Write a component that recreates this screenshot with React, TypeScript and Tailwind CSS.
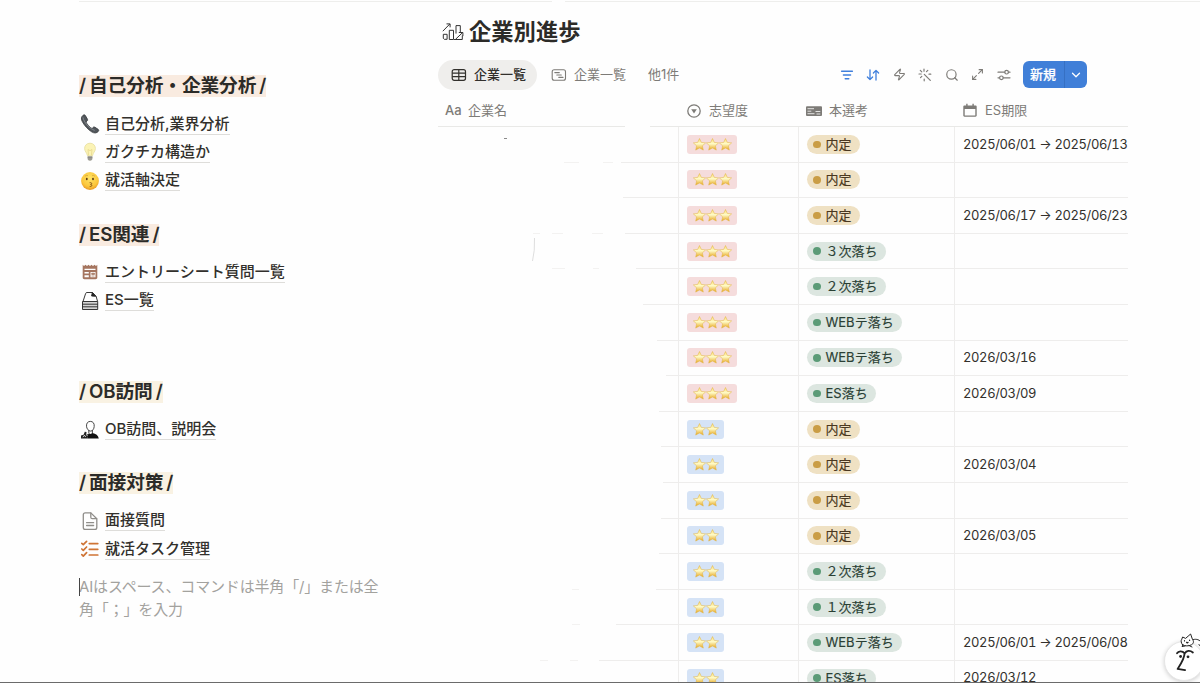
import type { ReactNode } from "react";
import { ChevronDown, Maximize2, Search, Zap } from "lucide-react";

type Tone = "gold" | "green";

type Row = {
  stars: 2 | 3;
  status: string;
  tone: Tone;
  date?: string;
  // visible length of the line under the name cell
  line: number;
  dashes?: [number, number][];
};

const ROWS: Row[] = [
  { stars: 3, status: "内定", tone: "gold", date: "2025/06/01 → 2025/06/13", line: 57, dashes: [[126, 15], [165, 10]] },
  { stars: 3, status: "内定", tone: "gold", line: 55 },
  { stars: 3, status: "内定", tone: "gold", date: "2025/06/17 → 2025/06/23", line: 53, dashes: [[95, 7], [114, 11], [154, 11]] },
  { stars: 3, status: "３次落ち", tone: "green", line: 42, dashes: [[114, 13], [155, 6]] },
  { stars: 3, status: "２次落ち", tone: "green", line: 35 },
  { stars: 3, status: "WEBテ落ち", tone: "green", line: 21 },
  { stars: 3, status: "WEBテ落ち", tone: "green", date: "2026/03/16", line: 12 },
  { stars: 3, status: "ES落ち", tone: "green", date: "2026/03/09", line: 19 },
  { stars: 2, status: "内定", tone: "gold", line: 17 },
  { stars: 2, status: "内定", tone: "gold", date: "2026/03/04", line: 15 },
  { stars: 2, status: "内定", tone: "gold", line: 17 },
  { stars: 2, status: "内定", tone: "gold", date: "2026/03/05", line: 19 },
  { stars: 2, status: "２次落ち", tone: "green", line: 22, dashes: [[134, 7]] },
  { stars: 2, status: "１次落ち", tone: "green", line: 62, dashes: [[134, 8]] },
  { stars: 2, status: "WEBテ落ち", tone: "green", date: "2025/06/01 → 2025/06/08", line: 79, dashes: [[102, 8], [132, 8]] },
  { stars: 2, status: "ES落ち", tone: "green", date: "2026/03/12", line: 79 },
];

function PhoneIcon() {
  return (
    <svg viewBox="0 0 20 20" className="size-5">
      <path d="M3.200 1.200C1.200 2.600.8 5 2.300 7.600c2 3.900 5.700 7.900 9.300 10.200 2.600 1.700 5.200 1.500 6.800-.5.500-.7.400-1.500-.3-2l-3.100-2c-.8-.5-1.600-.4-2.100.3l-.8 1c-2.500-1.400-5-4.200-6.200-6.700l1.100-.8c.7-.5.800-1.200.4-2L5.400 1.600c-.5-.9-1.300-1-2.200-.4Z" fill="#51565b" stroke="#33373a" strokeWidth=".8" />
      <path d="M3 3.400c.7 4.600 6.200 11.200 11.700 13" stroke="#8b9196" strokeWidth=".8" fill="none" />
    </svg>
  );
}

function BulbIcon() {
  return (
    <svg viewBox="0 0 20 20" className="size-5">
      <path d="M10 1.200c-3.400 0-5.400 2.400-5.400 5.400 0 2.700 2.300 4.100 2.900 7.200h5c.6-3.100 2.900-4.500 2.900-7.200 0-3-2-5.400-5.400-5.400Z" fill="#fbf3b5" stroke="#e6dda0" strokeWidth=".8" />
      <path d="M8.600 13.500 8 7.500l2 1.200 2-1.200-.6 6" fill="none" stroke="#e0cf80" strokeWidth=".6" />
      <path d="M7.600 14h4.800v3l-1.300 1.700H8.900L7.600 17Z" fill="#aaa99f" />
      <path d="M7.600 15.500h4.800M7.800 17h4.400" stroke="#777" strokeWidth=".6" />
    </svg>
  );
}

function KissIcon() {
  return (
    <svg viewBox="0 0 20 20" className="size-5">
      <defs>
        <radialGradient id="face" cx=".5" cy=".35" r=".65">
          <stop offset="0" stopColor="#ffe467" />
          <stop offset=".7" stopColor="#fbc63b" />
          <stop offset="1" stopColor="#e99a25" />
        </radialGradient>
      </defs>
      <circle cx="10" cy="10" r="8.900" fill="url(#face)" />
      <ellipse cx="6.800" cy="8" rx=".9" ry="1.300" fill="#5b3c16" />
      <ellipse cx="13" cy="8" rx=".9" ry="1.300" fill="#5b3c16" />
      <path d="M5 5.200q1.500-1.400 3-.5M12 4.700q1.600-.8 3 .6" fill="none" stroke="#c08a2a" strokeWidth=".5" />
      <path d="M10 11.600c2-.3 2.400 1.500.6 1.900 2 .2 1.600 2.200-.5 2" fill="none" stroke="#7b4a18" strokeWidth=".9" strokeLinecap="round" />
    </svg>
  );
}

function NewsIcon() {
  return (
    <svg viewBox="0 0 20 20" className="size-5">
      <path d="M2.700 2.700 4 4l1.500-1.300L7 4l1.500-1.300L10 4l1.500-1.300L13 4l1.500-1.300L16 4l1.300-1.300v12.800c0 1-.7 1.700-1.700 1.700H4.400c-1 0-1.700-.7-1.700-1.700Z" fill="#a5755f" />
      <path d="M4.500 6.700h11v1.300h-11ZM4.500 10h4.300v1.500H4.500ZM4.500 13.300h4.300v1.900H4.500ZM10.500 10h5v5.200h-5Z" fill="#fefefe" />
      <path d="M11.700 11.200h2.800v1.200h-2.800ZM11.500 14h3" fill="#a5755f" stroke="#a5755f" strokeWidth=".7" />
    </svg>
  );
}

function PaperStackIcon() {
  return (
    <svg viewBox="0 0 20 20" className="size-5" fill="none" stroke="#222" strokeWidth=".9">
      <path d="M3 10.500 5.600 2.600c.2-.7.600-1.100 1.300-1.100h5.600l3.600 3.800 1.500 5.200" />
      <path d="m12.300 1.600-.7 3.400 4.200.3Z" fill="#222" />
      <path d="M2.500 10.500h15.200v8H2.500Z" fill="#d5d5d5" />
      <path d="M2.500 13.200h15.200M2.500 15.800h15.200" />
    </svg>
  );
}

function PersonIcon() {
  return (
    <svg viewBox="0 0 20 20" className="size-5">
      <path d="M6.500 6.200C6.300 3.100 7.900 1.400 10.400 1.400s4.100 1.900 3.800 5c-.2 2.600-1.500 4.700-3.600 4.700S6.700 8.800 6.500 6.200Z" fill="#fff" stroke="#333" strokeWidth=".9" />
      <path d="M8.800 10.300v2.700M12.400 10.300v2.700" stroke="#333" strokeWidth=".9" />
      <path d="M7.500 18.600c0-2.600.3-4.400 1.300-5.400l1.800.9 1.800-1c3.400.6 5.900 2.300 6.400 5.500Z" fill="#111" />
      <path d="M1 18.600v-3l2.600-.8 1.200-3 1.700.2-.2 2 2 .6-.8 4Z" fill="#222" />
      <path d="m2.800 16.800 1.800-1.400 1 1.500M6 14.500l1.500 1" stroke="#fff" strokeWidth=".9" fill="none" />
    </svg>
  );
}

function PageIcon() {
  return (
    <svg viewBox="0 0 20 20" className="size-5" fill="none" stroke="#908e8a" strokeWidth="1.300" strokeLinejoin="round" strokeLinecap="round">
      <path d="M5.200 1.900h5.600l6 5.800v8.700c0 1.200-.7 1.900-1.900 1.900H5.200c-1.200 0-1.900-.7-1.900-1.900V3.800c0-1.200.7-1.900 1.900-1.900Z" />
      <path d="M10.800 2v4.200c0 1 .5 1.500 1.500 1.500h4.300M6.600 11.700h7M6.600 14.500h7" />
    </svg>
  );
}

function ChecklistIcon() {
  return (
    <svg viewBox="0 0 20 20" className="size-5" fill="none" stroke="#cf7435" strokeWidth="1.700" strokeLinecap="round" strokeLinejoin="round">
      <path d="m1.800 4.300 1.500 1.400L6.600 2.300M1.800 10l1.500 1.400L6.600 8M1.800 15.700l1.500 1.400 3.300-3.400M9.300 4.600h8.500M9.300 10.300h8.500M9.300 16h8.500" />
    </svg>
  );
}

function ChartIcon() {
  return (
    <svg viewBox="0 0 22 20" className="h-5 w-[22px]" fill="none" stroke="#333" strokeWidth="1">
      <path d="M.8 9.200 7.800 2M4.500 1.900h3.600v3.400" />
      <path d="M1.300 12.300h3.800v5H2.300l-1-1ZM7.300 8.300h4.200v9.200H7.300ZM14 3.600h4.300v7M14 3.600v8M12 17.500h8.300v-4" />
      <path d="m13.500 17.300 7.200-6.800M16.800 10.500h4.100v3.600" />
    </svg>
  );
}

function StarIcon() {
  return (
    <svg viewBox="0 0 13 13" className="h-[13px] w-[13px]">
      <path d="m6.500.5 1.800 3.900 4.300.5-3.200 2.900.9 4.300-3.800-2.100-3.800 2.100.9-4.300L.4 4.900l4.300-.5Z" fill="url(#star)" stroke="#e2b544" strokeWidth=".5" strokeLinejoin="round" />
    </svg>
  );
}

function Heading({ children, className }: { children: ReactNode; className: string }) {
  return (
    <h2 className="flex h-[22px] text-[18.700px] font-semibold leading-[22px] tracking-[-0.1px] text-[#2c2b28] [word-spacing:-1.600px]">
      <span className={className}>/ {children} /</span>
    </h2>
  );
}

function PageLink({ icon, children }: { icon: ReactNode; children: ReactNode }) {
  return (
    <a className="flex h-[28.300px] items-center gap-[5px] pl-px text-[15px] font-medium text-[#32302c]">
      {icon}
      <span className="border-b border-[#deddda] leading-[20px]">{children}</span>
    </a>
  );
}

function StatusPill({ tone, children }: { tone: Tone; children: ReactNode }) {
  const gold = tone === "gold";
  return (
    <span className={`flex h-[19px] items-center gap-[5px] rounded-full pl-[6px] pr-[8px] text-[13px] leading-[19px] ${gold ? "bg-[#efe1c3] text-[#4a3820] [-webkit-text-stroke:0.15px_#4a3820]" : "bg-[#dce6e0] text-[#2a4034] [-webkit-text-stroke:0.15px_#2a4034]"}`}>
      <span className={`size-[7.500px] rounded-full ${gold ? "bg-[#ca9d45]" : "bg-[#5b9b77]"}`} />
      {children}
    </span>
  );
}

function Sidebar() {
  return (
    <aside className="ml-[79px] w-[305px] shrink-0 pt-[75px]">
      <Heading className="bg-[#f9ebe0]">自己分析・企業分析</Heading>
      <div className="mt-[13px]">
        <PageLink icon={<PhoneIcon />}>自己分析,業界分析</PageLink>
        <PageLink icon={<BulbIcon />}>ガクチカ構造か</PageLink>
        <PageLink icon={<KissIcon />}>就活軸決定</PageLink>
      </div>

      <div className="mt-[29px]">
        <Heading className="bg-[#f9ebe0]">ES関連</Heading>
        <div className="mt-[12.200px]">
          <PageLink icon={<NewsIcon />}>エントリーシート質問一覧</PageLink>
          <PageLink icon={<PaperStackIcon />}>ES一覧</PageLink>
        </div>
      </div>

      <div className="mt-[66.500px]">
        <Heading className="bg-[#f9f2e3]">OB訪問</Heading>
        <div className="mt-[12.500px]">
          <PageLink icon={<PersonIcon />}>OB訪問、説明会</PageLink>
        </div>
      </div>

      <div className="mt-[28.500px]">
        <Heading className="bg-[#f9f2e3]">面接対策</Heading>
        <div className="mt-[12.300px]">
          <PageLink icon={<PageIcon />}>面接質問</PageLink>
          <PageLink icon={<ChecklistIcon />}>就活タスク管理</PageLink>
        </div>
      </div>

      <p className="relative mt-[13px] text-[15px] leading-[22.500px] tracking-[-0.160px] text-[#a3a29e]">
        <span className="absolute left-0 top-[2px] h-[18px] w-px bg-[#444]" />
        AIはスペース、コマンドは半角「/」または全
        <br />
        角「；」を入力
      </p>
    </aside>
  );
}

function Toolbar() {
  return (
    <div className="flex h-[30px] items-center text-[13px] text-[#7d7b77]">
      <div className="flex h-[30px] w-[99px] items-center gap-[7px] rounded-full bg-[#efeeec] pl-[13px] font-medium text-[#32302c]">
        <svg viewBox="0 0 16 16" className="size-4" fill="none" stroke="currentColor" strokeWidth="1.200">
          <rect x="1.200" y="2.700" width="13.300" height="10.600" rx="2" />
          <path d="M1.200 6.200h13.300M1.200 9.700h13.300M7.800 2.700v10.600" />
        </svg>
        企業一覧
      </div>
      <div className="ml-[14px] flex items-center gap-[7px]">
        <svg viewBox="0 0 16 16" className="size-4" fill="none" stroke="currentColor" strokeWidth="1.100" strokeLinecap="round">
          <rect x="1.200" y="2.700" width="13.300" height="10.600" rx="2" />
          <path d="M3.800 5.600h4.500M5.800 8h4.500M7.800 10.400h4.200" />
        </svg>
        企業一覧
      </div>
      <span className="ml-[22px]">他1件</span>

      <div className="ml-auto flex items-center gap-[10.200px]">
        <svg viewBox="0 0 16 16" className="size-4 text-[#3f7fdc]" fill="none" stroke="currentColor" strokeWidth="1.400" strokeLinecap="round">
          <path d="M2.600 4.200h10.800M4.400 8h7.200M6.200 11.800h3.600" />
        </svg>
        <svg viewBox="0 0 16 16" className="size-4 text-[#3f7fdc]" fill="none" stroke="currentColor" strokeWidth="1.300" strokeLinecap="round" strokeLinejoin="round">
          <path d="M5 3v9.500M2.400 10 5 12.600 7.600 10M11 13V3.500M8.400 6 11 3.400 13.600 6" />
        </svg>
        <Zap className="mx-[1.500px] size-[13px]" strokeWidth={2} />
        <svg viewBox="0 0 16 16" className="size-4" fill="none" stroke="currentColor" strokeWidth="1.200" strokeLinecap="round">
          <path d="m7.300 7.300 6 6M7 2v2.200M2 7h2.200M3.300 3.300l1.500 1.500M10.800 3.300 9.500 4.600M3.500 10.700l1.300-1.300M12 7.200h1.800M7.200 12v1.800" />
        </svg>
        <Search className="mx-px size-[14px]" strokeWidth={2} />
        <Maximize2 className="mx-[1.500px] size-[13px]" strokeWidth={2} />
        <svg viewBox="0 0 16 16" className="size-4" fill="none" stroke="currentColor" strokeWidth="1.200" strokeLinecap="round">
          <path d="M2 5.200h6.700M12.500 5.200H14M2 10.800h1.500M7.300 10.800H14" />
          <circle cx="10.600" cy="5.200" r="1.800" />
          <circle cx="5.400" cy="10.800" r="1.800" />
        </svg>
      </div>
      <div className="ml-[10.500px] mr-[41.500px] flex h-[27px] w-[64px] items-center overflow-hidden rounded-[6px] bg-[#407fd8] text-white">
        <span className="flex h-full w-[42px] items-center justify-center border-r border-[#3670c3] font-medium [-webkit-text-stroke:0.200px_#fff]">新規</span>
        <ChevronDown className="mx-auto size-[14px]" strokeWidth={2.2} />
      </div>
    </div>
  );
}

function TableHeader() {
  return (
    <div className="flex h-[31px] items-center text-[13px] text-[#7d7b77]">
      <div className="flex w-[241px] items-center gap-[7px] pl-[7px]">
        <span className="w-[16px] text-[13px] font-medium">Aa</span>
        企業名
      </div>
      <div className="flex w-[120px] items-center gap-[7px] pl-[7px]">
        <svg viewBox="0 0 16 16" className="size-4">
          <circle cx="8" cy="8" r="6.200" fill="none" stroke="currentColor" strokeWidth="1.300" />
          <path d="M5.200 6.200h5.600L8 10.500Z" fill="currentColor" />
        </svg>
        志望度
      </div>
      <div className="flex w-[156px] items-center gap-[7px] pl-[7px]">
        <svg viewBox="0 0 16 16" className="size-4">
          <rect x="0" y="3.300" width="16" height="9.700" rx="1" fill="currentColor" />
          <path d="M1.500 5.700h6.500M1.500 8.200h3.800M9.500 8.500h4.800M1.500 10.700h7M10.500 11h3.800" stroke="#fefefe" strokeWidth=".8" />
        </svg>
        本選考
      </div>
      <div className="flex items-center gap-[7px] pl-[7px]">
        <svg viewBox="0 0 16 16" className="size-4">
          <path d="M2.500 2.400h1.700V.8h1.400v1.600h4.800V.8h1.400v1.600h1.700c.7 0 1.200.5 1.200 1.200v9c0 .7-.5 1.200-1.200 1.200h-11c-.7 0-1.200-.5-1.200-1.200v-9c0-.7.500-1.200 1.200-1.200Z" fill="currentColor" />
          <path d="M2.700 6h10.600v6.500H2.700Z" fill="#fefefe" />
        </svg>
        ES期限
      </div>
    </div>
  );
}

function TableRow({ row }: { row: Row }) {
  return (
    <div className="flex h-[35.600px] shrink-0 text-[13px]">
      <div className="relative flex w-[240px] items-end justify-end">
        {row.dashes?.map(([x, w]) => (
          <span key={x} className="absolute bottom-0 h-px bg-[#f3f2f1]" style={{ left: x, width: w }} />
        ))}
        <span className="h-px bg-[#eeedec]" style={{ width: row.line }} />
      </div>
      <div className="flex w-[120px] items-center border-b border-l border-[#eeedec] pl-[8px]">
        <span className={`flex h-[19px] items-center rounded-[3px] px-[5.500px] ${row.stars === 3 ? "bg-[#f5dcdc]" : "bg-[#d5e3f6]"}`}>
          {Array.from({ length: row.stars }, (_, i) => <StarIcon key={i} />)}
        </span>
      </div>
      <div className="flex w-[156px] items-center border-b border-l border-[#eeedec] pl-[8px]">
        <StatusPill tone={row.tone}>{row.status}</StatusPill>
      </div>
      <div className="flex w-[174px] items-center whitespace-nowrap border-b border-l border-[#eeedec] pl-[8px] tabular-nums tracking-[-0.370px] text-[#32302c]">
        {row.date}
      </div>
    </div>
  );
}

function Database() {
  return (
    <main className="ml-[54px] flex w-[690px] shrink-0 flex-col pt-[16px]">
      <h1 className="flex h-[32px] items-center gap-[5px] pl-[4px] text-[22.300px] font-bold leading-[32px] text-[#2c2b28]">
        <ChartIcon />
        企業別進歩
      </h1>
      <div className="mt-[11.500px]">
        <Toolbar />
      </div>
      <div className="mt-[5.500px]">
        <TableHeader />
      </div>
      <div className="flex h-px shrink-0 justify-between">
        <span className="w-[187px] bg-[#e9e9e7]" />
        <span className="w-[478px] bg-[#e9e9e7]" />
      </div>
      {ROWS.map((row, i) => <TableRow key={i} row={row} />)}
    </main>
  );
}

function Assistant() {
  return (
    <div className="absolute bottom-[2px] right-[-4px] size-[40px] rounded-full border border-[#e6e6e6] bg-white shadow-[0_1px_4px_rgba(0,0,0,0.18)]">
      <svg viewBox="0 0 40 52" className="absolute -left-px -top-[12px] h-[52px] w-[40px]" fill="none" stroke="#222" strokeLinecap="round" strokeLinejoin="round">
        <path d="M18.500 14.800c-1.500-2-1.800-4-.7-5.600l.8-2.200 3 1.400 2.500-2.200 2.500-2.200 1.800 5.200c1.700 2.400 1.300 4.300-1 5.600-2.700 1.500-6.400 1.500-8.900 0Z" fill="#fff" strokeWidth="1" />
        <path d="M29.500 9.500c3-.7 6 .1 8 3M35 14.500l2 2.500M19 15l-1 1.500 3-.5M25 15.500l3 1.500" strokeWidth="1" />
        <path d="M20.500 10.700v.2M25.600 10.200v.2M22.500 12.300l.8.600.8-.6" strokeWidth="1.200" />
        <path d="M13 23.300c1.300-2.200 5.200-2.900 7.600.1 2-2.900 5.300-3.400 8.300-.9M20.600 23.400c-.4 6-4 10.800-7 15.500l7.500 1.300" strokeWidth="1.800" />
        <circle cx="16.600" cy="26.500" r="1.400" fill="#222" stroke="none" />
        <circle cx="24" cy="26.800" r="1.400" fill="#222" stroke="none" />
      </svg>
    </div>
  );
}

export default function App() {
  return (
    <div className="relative flex h-[683px] w-[1200px] overflow-hidden bg-[#fefefe] font-['Inter','Noto_Sans_CJK_JP',sans-serif]" lang="ja">
      {/* gradient shared by every star */}
      <svg className="absolute size-0">
        <linearGradient id="star" x1="0" y1="0" x2="0" y2="1">
          <stop offset="0" stopColor="#f8dc72" />
          <stop offset=".45" stopColor="#fffbc8" />
          <stop offset="1" stopColor="#e6a51c" />
        </linearGradient>
      </svg>

      <div className="absolute left-[79px] right-0 top-px flex h-px gap-[13px]">
        <span className="w-[473px] bg-[#eeeeec]" />
        <span className="flex-1 bg-[#eeeeec]" />
      </div>

      <Sidebar />
      <Database />

      {/* faint leftovers in the name column */}
      <span className="absolute left-[504px] top-[138px] h-px w-[3px] bg-[#8a8a8a]" />
      <svg viewBox="0 0 6 26" className="absolute left-[531px] top-[237px] h-[26px] w-[6px]">
        <path d="M3.500 1Q4 14 1.500 24" fill="none" stroke="#dedede" strokeWidth="1" />
      </svg>

      <Assistant />
      <div className="absolute inset-x-0 bottom-0 h-px bg-[#6b6b6b]" />
    </div>
  );
}
